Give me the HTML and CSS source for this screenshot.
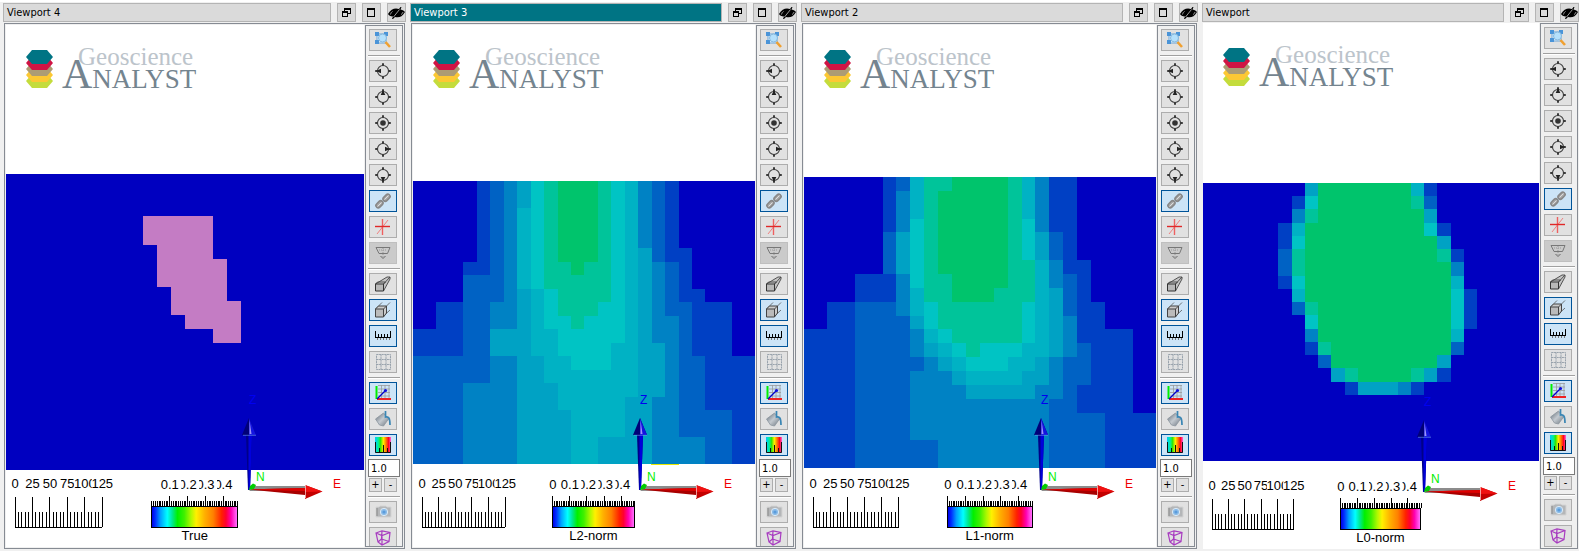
FILE: index.html
```html
<!DOCTYPE html>
<html lang="en">
<head>
<meta charset="utf-8">
<title>Geoscience ANALYST</title>
<link rel="stylesheet" href="styles.css">
</head>
<body>
<svg class="defs" aria-hidden="true">
  <defs>
    <g id="ring" fill="none" stroke="#3a3a3a">
      <circle cx="9" cy="8" r="5.500" stroke-width="1.100"/>
      <path d="M9 .2v2.600M9 13.200v2.600M1.200 8h2.600M14.200 8h2.600" stroke-width="2"/>
    </g>
    <linearGradient id="rainbow">
      <stop offset="0" stop-color="#00c8ff"/><stop offset=".2" stop-color="#00f0a0"/><stop offset=".35" stop-color="#30e800"/>
      <stop offset=".52" stop-color="#fff000"/><stop offset=".68" stop-color="#ff8000"/><stop offset=".85" stop-color="#ff0020"/><stop offset="1" stop-color="#ff60e0"/>
    </linearGradient>
    <linearGradient id="steel" x1="0" y1="0" x2="1" y2="1"><stop offset="0" stop-color="#5c6670"/><stop offset=".5" stop-color="#c4cad0"/><stop offset="1" stop-color="#6c7680"/></linearGradient>
  </defs>
  <symbol id="i-restore" viewBox="0 0 9 9"><path d="M2 0h7v6H6v3H0V3h2zM3 2v1h3v2h2V2zM1 5v3h4V5z" fill="#000" fill-rule="evenodd"/></symbol>
  <symbol id="i-max" viewBox="0 0 9 9"><path d="M0 0h8v9H0zM1 2v6h6V2z" fill="#000" fill-rule="evenodd"/></symbol>
  <symbol id="i-hide" viewBox="0 0 17 12"><path d="M0 7C3 2 7 .5 11 2l1.500-2h1l-1 2.500C15 3 16 4 17 5c-3 5-6 6-10 5l-2 2H4l1-2.500C2 9.500 1 8.500 0 7z" fill="#000"/><path d="M2.500 7.500c.5-2 1.200-2.500 2-3M15 5c-.5 1.500-1 2-2 2.500M11.500 2.500 5.500 10" fill="none" stroke="#ddd" stroke-width=".7"/></symbol>
  <symbol id="i-zoom" viewBox="0 0 18 16"><path d="M3 2h9v9H3z" fill="#e8f4fc" stroke="#6aa4d8"/><path d="M1 0h4v4H1zM10 0h4v4h-4zM1 8h4v4H1z" fill="#4a94d8"/><circle cx="8.500" cy="6" r="4" fill="#b4e0fc" stroke="#88b8dc"/><path d="m11.500 10 4.500 5" stroke="#f0a030" stroke-width="2.600"/></symbol>
  <symbol id="i-west" viewBox="0 0 18 16"><use href="#ring"/><path d="M2 8l5-2.300v4.600z" fill="#222"/></symbol>
  <symbol id="i-up" viewBox="0 0 18 16"><use href="#ring"/><path d="M9 1 6.700 6h4.600z" fill="#222"/></symbol>
  <symbol id="i-center" viewBox="0 0 18 16"><use href="#ring"/><circle cx="9" cy="8" r="2.800" fill="#333"/></symbol>
  <symbol id="i-east" viewBox="0 0 18 16"><use href="#ring"/><path d="m16 8-5-2.300v4.600z" fill="#222"/></symbol>
  <symbol id="i-down" viewBox="0 0 18 16"><use href="#ring"/><path d="m9 15-2.300-5h4.600z" fill="#222"/></symbol>
  <symbol id="i-link" viewBox="0 0 18 16"><g fill="#aaa" stroke="#888" stroke-width="1.600"><rect x="8.500" y="2.500" width="8" height="4.500" rx="2.200" transform="rotate(-45 12.500 4.700)"/><rect x="1.500" y="9" width="8" height="4.500" rx="2.200" transform="rotate(-45 5.500 11.300)"/></g><path d="m10.500 6.500 4-4M3.500 13.500l4-4" stroke="#ddd"/></symbol>
  <symbol id="i-cross" viewBox="0 0 18 16"><path d="M3 15 14 1" stroke="#f08080"/><path d="M8.500 0v16" stroke="#ee6060" stroke-width="1.400"/><path d="M1 7.500h15" stroke="#e02828" stroke-width="1.400"/></symbol>
  <symbol id="i-clip" viewBox="0 0 18 16"><path d="M2 2.500h14l-2.500 6H5z" fill="none" stroke="#777"/><path d="M9 3v9M5 5h8" stroke="#999" stroke-dasharray="1 1"/><path d="M6.500 11 9 13.500l2.500-2.500" fill="none" stroke="#666"/></symbol>
  <symbol id="i-persp" viewBox="0 0 18 16"><path d="M1.500 8 13 1h3v2L9.500 15M9.500 8 16 1M1.500 8l2-2h8l-2 2" fill="#c4c4c4" stroke="#444" stroke-width=".9"/><path d="M1.500 8h8v7h-8z" fill="#b8b8b8" stroke="#333"/></symbol>
  <symbol id="i-ortho" viewBox="0 0 18 16"><path d="M1.500 7 8 .5M9.500 7 16 .5M9.500 14 16 8" fill="none" stroke="#555" stroke-width=".8"/><path d="m1.500 7 3-3h8v7l-3 4" fill="#ccc" stroke="#444"/><path d="M1.500 7h8v8h-8z" fill="#bbb" stroke="#444"/><path d="m9.500 7 3-3" stroke="#444"/></symbol>
  <symbol id="i-ruler" viewBox="0 0 18 16"><path d="M1.500 3v7M16.500 3v7M4.500 6v4M7.500 6v4M10.500 6v4M13.500 6v4" stroke="#000"/><path d="M1 9.500h16" stroke="#000"/><path d="M3.500 10v2M6.500 10v2M9.500 10v2M12.500 10v2M15.500 10v2" stroke="#777"/></symbol>
  <symbol id="i-grid" viewBox="0 0 18 16"><path d="M2.500.5h14v15h-14zM7 .5v15M12 .5v15M2.500 5.500h14M2.500 10.500h14" fill="none" stroke="#98a2ac" stroke-dasharray="2 .6"/></symbol>
  <symbol id="i-axes" viewBox="0 0 18 16"><path d="M4 .5h12M4 4h12M4 7.500h12M4 11h12M7.500 0v14M11 0v14M15 0v14" stroke="#999" stroke-width=".8"/><path d="M2.500 14V1" stroke="#0e0" stroke-width="2"/><path d="M3 14h14" stroke="#e22" stroke-width="2"/><path d="m3 14 8-8" stroke="#00c" stroke-width="1.200"/><circle cx="11.500" cy="5.500" r="1.600" fill="#11d"/></symbol>
  <symbol id="i-fill" viewBox="0 0 18 16"><path d="m1.500 8 8-6 5 6-5 7-4-1z" fill="url(#steel)" stroke="#8c969e" stroke-width=".8"/><path d="M11.500 0v6c3-1 4.500 1 4.500 8" fill="none" stroke="#3a86b4" stroke-width="1.700"/></symbol>
  <symbol id="i-legend" viewBox="0 0 18 16"><path d="M1 0h16v16H1z" fill="url(#rainbow)"/><path d="M1.500 5v10.500h15V5M5.500 11v4M9.500 8v7M13.500 11v4" fill="none" stroke="#111"/></symbol>
  <symbol id="i-camera" viewBox="0 0 18 16"><path d="M2 3h3l1-1h6l1 1h4v10H2z" fill="#b4b6b8" stroke="#d4d4d4"/><path d="M3 4v8" stroke="#888"/><circle cx="10" cy="8" r="3.700" fill="#8cbce8" stroke="#ddeaf4"/><circle cx="10" cy="8" r="1.600" fill="#5a9cdc"/></symbol>
  <symbol id="i-box" viewBox="0 0 18 16"><path d="M2 3 8 .8l8 1.700-1 9L8 15l-4-3zM2 3l6 2.500L16 2.500M8 5.500 8 15M8 .8 7.500 9l-3.500 3M7.500 9l7.500 2.500" fill="none" stroke="#a83cc0" stroke-width="1.200"/></symbol>

  <symbol id="logo" viewBox="0 0 174 42" overflow="visible">
    <path d="M0 32l6-7h15l6 7-6 7H6z" fill="#c4dc3c"/>
    <path d="M0 26l6-7h15l6 7-6 7H6z" fill="#fcc834"/>
    <path d="M0 20l6-7h15l6 7-6 7H6z" fill="#ac9c74"/>
    <path d="M0 14l6-7h15l6 7-6 7H6z" fill="#d01444"/>
    <path d="M0 8l6-7h15l6 7-6 7H6z" fill="#007484"/>
    <text class="logo-top" x="52" y="16">Geoscience</text>
    <text class="logo-main" x="36" y="39"><tspan class="logo-initial">A</tspan>NALYST</text>
  </symbol>

  <symbol id="gnomon" viewBox="0 0 104 110" overflow="visible">
    <path d="M10 100l6-5h50v4z" fill="#8c8c8c"/>
    <path d="M10 98.500 66 97v7z" fill="#a80000"/><path d="M10 98.500 66 97v3z" fill="#e00000"/>
    <path d="M66 94l17.500 6.500L66 108z" fill="#c40000"/><path d="M66 94l17.500 6.500L66 101z" fill="#f01010"/><path d="M66.500 94v13" stroke="#fff" stroke-width=".6"/>
    <path d="M7 44h6l-2 55H9z" fill="#000088"/><path d="M9.500 44H13l-2 55H9.500z" fill="#0000dc"/>
    <path d="M10 27 3 44h14z" fill="#000078"/><path d="M10 27v17h7z" fill="#1414e0"/><path d="M10.500 29v14h2z" fill="#9c94f8"/><path d="M4 44.300h13" stroke="#6ca0e8" stroke-width=".6"/>
    <path d="M10 99l1-4 3-2.500 3 1.500-2 4z" fill="#00cc00"/>
    <text class="axis axis-z" x="10" y="13">Z</text>
    <text class="axis axis-n" x="17" y="90">N</text>
    <text class="axis axis-e" x="94" y="97">E</text>
  </symbol>
</svg>

<main class="workspace" id="workspace"></main>

<template id="toolbar">
  <div class="toolbar" role="toolbar" aria-label="View tools">
    <button class="tool" aria-label="Zoom to extent"><svg><use href="#i-zoom"/></svg></button>
    <hr class="divider">
    <button class="tool" aria-label="View west"><svg><use href="#i-west"/></svg></button>
    <button class="tool" aria-label="View north"><svg><use href="#i-up"/></svg></button>
    <button class="tool" aria-label="Plan view"><svg><use href="#i-center"/></svg></button>
    <button class="tool" aria-label="View east"><svg><use href="#i-east"/></svg></button>
    <button class="tool" aria-label="View south"><svg><use href="#i-down"/></svg></button>
    <button class="tool is-on" aria-pressed="true" aria-label="Link cameras"><svg><use href="#i-link"/></svg></button>
    <button class="tool" aria-label="Rotation centre"><svg><use href="#i-cross"/></svg></button>
    <button class="tool" disabled aria-label="Clipping"><svg><use href="#i-clip"/></svg></button>
    <hr class="divider">
    <button class="tool" aria-label="Perspective"><svg><use href="#i-persp"/></svg></button>
    <button class="tool is-on" aria-pressed="true" aria-label="Orthographic"><svg><use href="#i-ortho"/></svg></button>
    <button class="tool is-on" aria-pressed="true" aria-label="Scale bar"><svg><use href="#i-ruler"/></svg></button>
    <button class="tool" aria-label="Grid"><svg><use href="#i-grid"/></svg></button>
    <hr class="divider">
    <button class="tool is-on" aria-pressed="true" aria-label="Axes"><svg><use href="#i-axes"/></svg></button>
    <button class="tool" aria-label="Background colour"><svg><use href="#i-fill"/></svg></button>
    <button class="tool is-on" aria-pressed="true" aria-label="Colour legend"><svg><use href="#i-legend"/></svg></button>
    <div class="exaggeration">
      <input class="factor" type="text" value="1.0" aria-label="Vertical exaggeration">
      <button class="step" aria-label="Increase">+</button>
      <button class="step" aria-label="Decrease">-</button>
    </div>
    <hr class="divider">
    <button class="tool" aria-label="Snapshot"><svg><use href="#i-camera"/></svg></button>
    <button class="tool" aria-label="Bounding box"><svg><use href="#i-box"/></svg></button>
  </div>
</template>
<script src="app.js"></script>
</body>
</html>
```

FILE: styles.css
```css
* { box-sizing: border-box; }

body {
  margin: 0;
  height: 100vh;
  background: #f0f0f0;
  border-top: 2px solid #fff;
  color: #000;
  font: 11px/15px "DejaVu Sans Condensed", "Noto Sans", sans-serif;
}

.defs { position: absolute; width: 0; height: 0; }

.workspace {
  display: grid;
  grid-template-columns: 403fr 387fr 397fr 377fr;
  gap: 4px;
  height: 100%;
  padding: 1px 0 2px 3px;
}

.viewport {
  display: flex;
  flex-direction: column;
  gap: 1px;
  min-width: 0;
  min-height: 0;
}

/* Title bar */
.titlebar { display: flex; gap: 6px; height: 19px; flex: none; }

.title {
  flex: 1;
  margin: 0;
  padding: 1px 3px;
  border: 1px solid #b4b4b4;
  background: #dadada;
  font-size: 11px;
  font-weight: normal;
  line-height: 15px;
}

.is-active .title { background: #007484; color: #fff; }

.window-button {
  display: grid;
  place-items: center;
  width: 19px;
  padding: 0;
  border: 1px solid #b4b4b4;
  background: #dadada;
}

.window-button svg { width: 9px; height: 9px; }
.window-button .eye { width: 17px; height: 12px; }

/* Frame: scene on the left, tools on the right */
.frame {
  display: flex;
  gap: 1px;
  flex: 1;
  min-height: 0;
  margin: 0 1px;
  padding: 1px;
  border: 1px solid #868b93;
}

.is-bare .frame { padding: 0; border: 0; }

.scene {
  display: grid;
  flex: 1;
  min-width: 0;
  overflow: hidden;
  background: #fff;
}

.scene > * { grid-area: 1 / 1; }

.logo { width: 174px; height: 42px; margin: 24px 0 0 20px; overflow: visible; }
.logo-top { fill: #bcc4cb; font: 25px "Liberation Serif", serif; }
.logo-main { fill: #74848f; font: 27px "Liberation Serif", serif; }
.logo-initial { font-size: 42px; }

.model { align-self: center; display: block; width: 100%; margin-top: 72px; overflow: visible; }

.gnomon { place-self: end; width: 104px; height: 110px; margin: 0 21px 46px 0; }
.axis { font: 12px "Liberation Sans", sans-serif; }
.axis-z { fill: #0000f0; }
.axis-n { fill: #00ee00; }
.axis-e { fill: #f00000; }

/* Scale bar and colour legend */
.legend {
  display: grid;
  grid-template-columns: 25% 25%;
  column-gap: 14%;
  align-self: end;
  padding: 0 0 4px 9px;
  font: 13px/15px "Liberation Sans", sans-serif;
}

.legend svg { display: block; width: 100%; overflow: visible; }
.legend line { stroke: #000; shape-rendering: crispEdges; }
.legend text { text-anchor: middle; }
.mask { fill: #fff; }
.ruler { height: 52px; }
.ticks { height: 30px; }
.colours { margin: 0; text-align: center; white-space: nowrap; }

.ramp {
  height: 22px;
  border: 1px solid #000;
  background: linear-gradient(90deg, #0000e8 0%, #0030ff 4%, #00a0ff 10%, #00ffff 18%, #00e890 24%, #00f000 30%, #40f000 38%, #b0f800 46%, #fff000 52%, #ffb000 62%, #ff8000 72%, #ff2000 82%, #ff0030 87%, #ff00b0 93%, #ff70ff 100%);
}

/* Toolbar */
.toolbar {
  display: flex;
  flex-direction: column;
  gap: 4px;
  width: 38px;
  min-height: 0;
  padding: 3px 2px 0;
  border: 1px solid #868b93;
  overflow: hidden;
}

.tool {
  display: grid;
  place-items: center;
  flex: none;
  width: 28px;
  height: 22px;
  margin-left: 1px;
  padding: 0;
  border: 1px solid #adadad;
  background: #e1e1e1;
}

.tool svg { width: 18px; height: 16px; }
.tool.is-on { border-color: #005499; background: #cce4f7; }
.tool:disabled { border-color: #bfbfbf; background: #cacaca; }

.divider { flex: none; width: 32px; height: 1px; margin: 0; border: 0; background: #a0a0a0; box-shadow: 0 1px #fff; }

.exaggeration {
  display: grid;
  flex: none;
  grid-template-columns: 13px 13px;
  gap: 1px 2px;
  padding-left: 1px;
  margin-top: -1px;
}

.factor {
  grid-column: 1 / -1;
  width: 32px;
  height: 18px;
  margin-left: -1px;
  padding: 0 2px;
  border: 1px solid #7a7a7a;
  background: #fff;
  font: inherit;
}

.step { height: 14px; padding: 0; border: 1px solid #adadad; background: #e1e1e1; font: inherit; line-height: 12px; }
```

FILE: app.js
```js
const PALETTE = ["#0000c0", "#0040c4", "#0062c4", "#0082c4", "#00a2c4", "#00b2c4", "#00c4c4", "#00c49a", "#00c46c"];

// Each model column is a run-length list, top to bottom: "<level>x<cells>".
const L2 = [
  "0x11 1x2 2x8", "0x11 1x2 2x8", "0x9 1x4 2x8", "0x9 1x4 2x8", "0x6 1x1 2x8 3x6", "1x7 2x8 3x6",
  "2x9 3x2 4x2 3x8", "3x11 4x2 3x8", "4x2 5x6 4x13", "6x8 5x5 4x8", "7x8 6x3 5x4 4x6", "8x6 7x4 6x3 5x4 4x4",
  "8x7 7x4 6x3 5x7", "8x6 7x4 6x4 5x7", "7x9 6x5 5x5 4x2", "6x12 5x7 4x2", "5x16 4x5", "3x5 4x16",
  "2x6 3x6 4x4 3x5", "1x6 2x4 3x11", "0x5 1x4 2x10 3x2", "0x8 1x5 2x6 3x2", "0x9 1x8 2x4", "0x9 1x8 2x4",
  "0x13 1x8", "0x13 1x8"
];
const L1 = [
  "0x11 1x10", "0x11 1x10", "0x9 1x12", "0x9 1x12", "0x7 1x2 2x12", "0x7 1x2 2x12",
  "1x4 2x3 1x2 2x12", "2x1 3x3 4x3 3x3 2x11", "5x3 6x5 5x2 4x1 3x2 2x1 3x5 2x2", "7x9 6x2 5x1 4x1 3x6 2x2",
  "7x1 8x6 7x4 6x1 5x1 4x1 3x7", "8x9 7x3 6x1 5x1 4x1 3x6", "8x9 7x4 6x1 5x1 4x1 3x5", "8x9 7x3 6x2 5x1 4x1 3x5",
  "8x8 7x4 6x2 5x1 4x1 3x5", "7x12 6x1 5x2 4x1 3x5", "5x3 6x3 7x3 6x3 5x2 4x2 3x5", "3x4 4x2 5x7 4x2 3x6",
  "1x4 2x2 3x2 4x5 3x3 2x5", "1x7 2x3 3x3 2x8", "0x6 1x6 2x3 1x2 2x4", "0x9 1x8 2x4", "0x11 1x10", "0x11 1x10",
  "0x17 1x4", "0x17 1x4"
];
const L0 = [
  "", "", "", "", "", "", "0x3 1x2 2x2 1x1", "0x1 1x1 3x1 5x1 6x1 7x2 6x1 5x1 2x1", "4x1 6x1 7x1 8x6 7x1 6x1 3x1 1x1",
  "8x12 7x1 2x1", "8x14 4x1", "8x14 7x1 1x1", "8x15 4x1", "8x15 4x1", "8x15 4x1", "8x15 3x1", "5x1 7x1 8x12 7x1 1x1",
  "1x1 2x1 4x1 6x1 8x10 4x1", "0x3 1x1 4x1 7x1 8x7 4x1 1x1", "0x5 1x1 3x1 5x1 6x3 5x1 2x1", "0x8 1x3"
];

const VIEWS = [
  { title: "Viewport 4", name: "True", size: [358, 296], labels: ["", "0.1", "0.2", "0.3", "0.4"],
    shape: "M137 42h70v43h14v42h14v42h-28v-14h-28v-14h-14v-28h-14v-42h-14z" },
  { title: "Viewport 3", name: "L2-norm", size: [342, 283], columns: L2, edge: 10, cell: 13.45, active: true, strip: [238, 28] },
  { title: "Viewport 2", name: "L1-norm", size: [352, 291], columns: L1, edge: 9, cell: 13.9 },
  { title: "Viewport", name: "L0-norm", size: [336, 278], columns: L0, edge: 9, cell: 13.25, bare: true }
];

function model(view) {
  const [w, h] = view.size;
  let out = `<rect width="${w}" height="${h}" fill="${PALETTE[0]}"/>`;
  if (view.shape) out += `<path d="${view.shape}" fill="#c47cc4"/>`;
  const rowHeight = h / 21;
  (view.columns || []).forEach((runs, c) => {
    const left = c ? Math.round(view.edge + (c - 1) * view.cell) : 0;
    const right = Math.min(w, Math.round(view.edge + c * view.cell));
    let row = 0;
    for (const run of runs.split(" ").filter(Boolean)) {
      const [level, count] = run.split("x").map(Number);
      const top = Math.round(row * rowHeight);
      row += count;
      const bottom = Math.round(row * rowHeight);
      if (level) out += `<rect x="${left}" y="${top}" width="${right - left}" height="${bottom - top}" fill="${PALETTE[level]}"/>`;
    }
  });
  if (view.strip) out += `<rect x="${view.strip[0]}" y="${h}" width="${view.strip[1]}" height="1" fill="#e8e800"/>`;
  return `<svg class="model" viewBox="0 0 ${w} ${h}" shape-rendering="crispEdges" role="img" aria-label="${view.name} section">${out}</svg>`;
}

const tick = (x, y1, y2) => `<line x1="${x}%" x2="${x}%" y1="${y1}" y2="${y2}"/>`;

// Labels sit on white boxes, so crowded neighbours hide part of each other.
const label = (x, y, text, box) =>
  `<svg x="${x}%" y="0" width="1" height="20"><rect class="mask" x="${-box / 2}" y="${y - 11}" width="${box}" height="12"/><text x="0" y="${y}">${text}</text></svg>`;

function ruler() {
  let out = "";
  ["0", "25", "50", "75", "100", "125"].forEach((text, i) => { out += label(i * 20, 12, text, text.length * 7); });
  for (let i = 0; i <= 25; i++) out += tick(i * 4, i % 5 ? 36 : 21, 51);
  return `<svg class="ruler">${out}<line x1="0" x2="100%" y1="51" y2="51"/></svg>`;
}

function ticks(labels) {
  let out = "";
  for (let i = labels.length - 1; i >= 0; i--) {
    if (labels[i]) out += label(1 + i * 20.5, 13, labels[i], labels[i].length > 1 ? 23 : 8);
  }
  for (let i = 0; i <= 48; i++) out += tick(1 + i * 2.05, i % 10 || !labels[i / 10] ? 25 : 20, 30);
  return `<svg class="ticks">${out}</svg>`;
}

const workspace = document.getElementById("workspace");
const toolbar = document.getElementById("toolbar");

for (const view of VIEWS) {
  const section = document.createElement("section");
  section.className = "viewport" + (view.active ? " is-active" : "") + (view.bare ? " is-bare" : "");
  section.innerHTML = `
    <header class="titlebar">
      <h2 class="title">${view.title}</h2>
      <button class="window-button" aria-label="Restore"><svg><use href="#i-restore"/></svg></button>
      <button class="window-button" aria-label="Maximize"><svg><use href="#i-max"/></svg></button>
      <button class="window-button" aria-label="Hide"><svg class="eye"><use href="#i-hide"/></svg></button>
    </header>
    <div class="frame">
      <div class="scene">
        ${model(view)}
        <svg class="logo" role="img" aria-label="Geoscience ANALYST"><use href="#logo"/></svg>
        <div class="legend">
          ${ruler()}
          <figure class="colours">
            ${ticks(view.labels || ["0", "0.1", "0.2", "0.3", "0.4"])}
            <div class="ramp"></div>
            <figcaption>${view.name}</figcaption>
          </figure>
        </div>
        <svg class="gnomon" role="img" aria-label="Axes"><use href="#gnomon"/></svg>
      </div>
    </div>`;
  section.querySelector(".frame").append(toolbar.content.cloneNode(true));
  workspace.append(section);
}
```
